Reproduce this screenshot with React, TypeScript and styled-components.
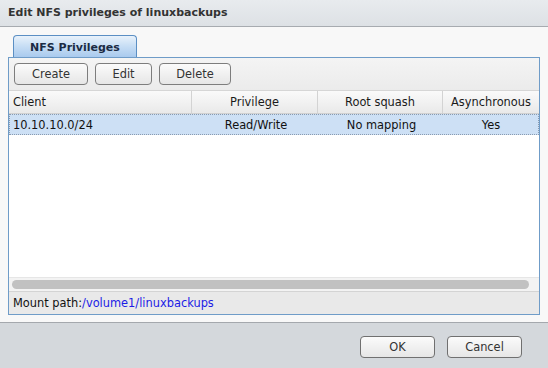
import styled, { createGlobalStyle } from 'styled-components';

const GlobalStyle = createGlobalStyle`
  html, body {
    margin: 0;
    padding: 0;
    background: #d4d8dc;
  }
  * {
    box-sizing: border-box;
  }
`;

const Dialog = styled.div`
  width: 548px;
  height: 368px;
  display: flex;
  flex-direction: column;
  font-family: "DejaVu Sans", Verdana, sans-serif;
  font-size: 11.4px;
  color: #1a1a1a;
  overflow: hidden;
`;

const TitleBar = styled.div`
  height: 27px;
  flex-shrink: 0;
  display: flex;
  align-items: center;
  padding: 0 8px 1px;
  background: linear-gradient(#e8ebee, #dde1e5);
  border-bottom: 1px solid #a7abb0;
  font-weight: 700;
  font-size: 11px;
  color: #333;
`;

const Body = styled.div`
  flex: 1;
  display: flex;
  flex-direction: column;
  padding: 8px 8px 7px;
  background: #f8f8f8;
`;

const TabStrip = styled.div`
  display: flex;
  padding-left: 5px;
  height: 22px;
  flex-shrink: 0;
`;

const Tab = styled.div`
  width: 124px;
  height: 22px;
  display: flex;
  align-items: center;
  justify-content: center;
  padding-top: 1px;
  border: 1px solid #5b8fc4;
  border-bottom: none;
  border-radius: 4px 4px 0 0;
  background: linear-gradient(#e9f2fb 0%, #c9dff5 45%, #a9caee 100%);
  font-weight: 700;
  font-size: 11px;
  color: #1b2b44;
`;

const Panel = styled.div`
  flex: 1;
  display: flex;
  flex-direction: column;
  border: 1px solid #6f9cc8;
  background: #fff;
`;

const Toolbar = styled.div`
  height: 33px;
  flex-shrink: 0;
  display: flex;
  align-items: center;
  gap: 7px;
  padding: 0 5px;
  background: linear-gradient(#f4f4f4, #ebebeb);
  border-bottom: 1px solid #d6d6d6;
`;

const Button = styled.button<{ $w: number }>`
  width: ${({ $w }) => $w}px;
  height: 22px;
  margin: 0;
  padding: 0;
  border: 1px solid #7d7d7d;
  border-radius: 4px;
  background: linear-gradient(#fbfbfb, #e6e6e6);
  font-family: "DejaVu Sans", Verdana, sans-serif;
  font-size: 11.4px;
  color: #333;
`;

const Grid = styled.div`
  flex: 1;
  display: flex;
  flex-direction: column;
`;

const Columns = styled.div`
  display: grid;
  grid-template-columns: 183px 126px 125px 1fr;
`;

const HeaderRow = styled(Columns)`
  height: 23px;
  background: linear-gradient(#fafafa, #e9e9e9);
  border-bottom: 1px solid #d0d0d0;
`;

const HeaderCell = styled.div<{ $left?: boolean }>`
  display: flex;
  align-items: center;
  justify-content: ${({ $left }) => ($left ? 'flex-start' : 'center')};
  padding-left: ${({ $left }) => ($left ? '4px' : '0')};
  border-right: 1px solid #d3d3d3;
  color: #1a1a1a;

  &:last-child {
    border-right: none;
  }
`;

const DataRow = styled(Columns)`
  height: 21px;
  background: #cde0f5;
  border: 1px dotted #8a9bb0;
`;

const DataCell = styled.div<{ $left?: boolean }>`
  display: flex;
  align-items: center;
  justify-content: ${({ $left }) => ($left ? 'flex-start' : 'center')};
  padding-left: ${({ $left }) => ($left ? '3px' : '0')};
  color: #111;
`;

const Filler = styled.div`
  flex: 1;
  background: #fff;
`;

const ScrollTrack = styled.div`
  height: 14px;
  flex-shrink: 0;
  padding: 2px 10px 3px 3px;
  background: #f3f3f3;
  border-top: 1px solid #e6e6e6;
`;

const ScrollThumb = styled.div`
  height: 9px;
  border-radius: 5px;
  background: #c1c1c1;
`;

const MountBar = styled.div`
  height: 23px;
  flex-shrink: 0;
  display: flex;
  align-items: center;
  padding-left: 4px;
  background: #e9e9e9;
  border-top: 1px solid #d4d4d4;
  color: #111;
`;

const PathLink = styled.span`
  color: #1c1ce6;
`;

const Footer = styled.div`
  height: 46px;
  flex-shrink: 0;
  display: flex;
  align-items: flex-start;
  justify-content: flex-end;
  gap: 12px;
  padding: 13px 26px 0 0;
  background: #d4d8dc;
  border-top: 1px solid #a4a8ad;
`;

const FooterButton = styled(Button)`
  border-color: #707070;
`;

const columns = ['Client', 'Privilege', 'Root squash', 'Asynchronous'];
const row = ['10.10.10.0/24', 'Read/Write', 'No mapping', 'Yes'];

export default function App() {
  return (
    <>
      <GlobalStyle />
      <Dialog>
        <TitleBar>Edit NFS privileges of linuxbackups</TitleBar>
        <Body>
          <TabStrip>
            <Tab>NFS Privileges</Tab>
          </TabStrip>
          <Panel>
            <Toolbar>
              <Button $w={74}>Create</Button>
              <Button $w={57}>Edit</Button>
              <Button $w={72}>Delete</Button>
            </Toolbar>
            <Grid>
              <HeaderRow>
                {columns.map((c, i) => (
                  <HeaderCell key={c} $left={i === 0}>{c}</HeaderCell>
                ))}
              </HeaderRow>
              <DataRow>
                {row.map((v, i) => (
                  <DataCell key={i} $left={i === 0}>{v}</DataCell>
                ))}
              </DataRow>
              <Filler />
              <ScrollTrack>
                <ScrollThumb />
              </ScrollTrack>
            </Grid>
            <MountBar>
              Mount path:<PathLink>/volume1/linuxbackups</PathLink>
            </MountBar>
          </Panel>
        </Body>
        <Footer>
          <FooterButton $w={75}>OK</FooterButton>
          <FooterButton $w={75}>Cancel</FooterButton>
        </Footer>
      </Dialog>
    </>
  );
}
